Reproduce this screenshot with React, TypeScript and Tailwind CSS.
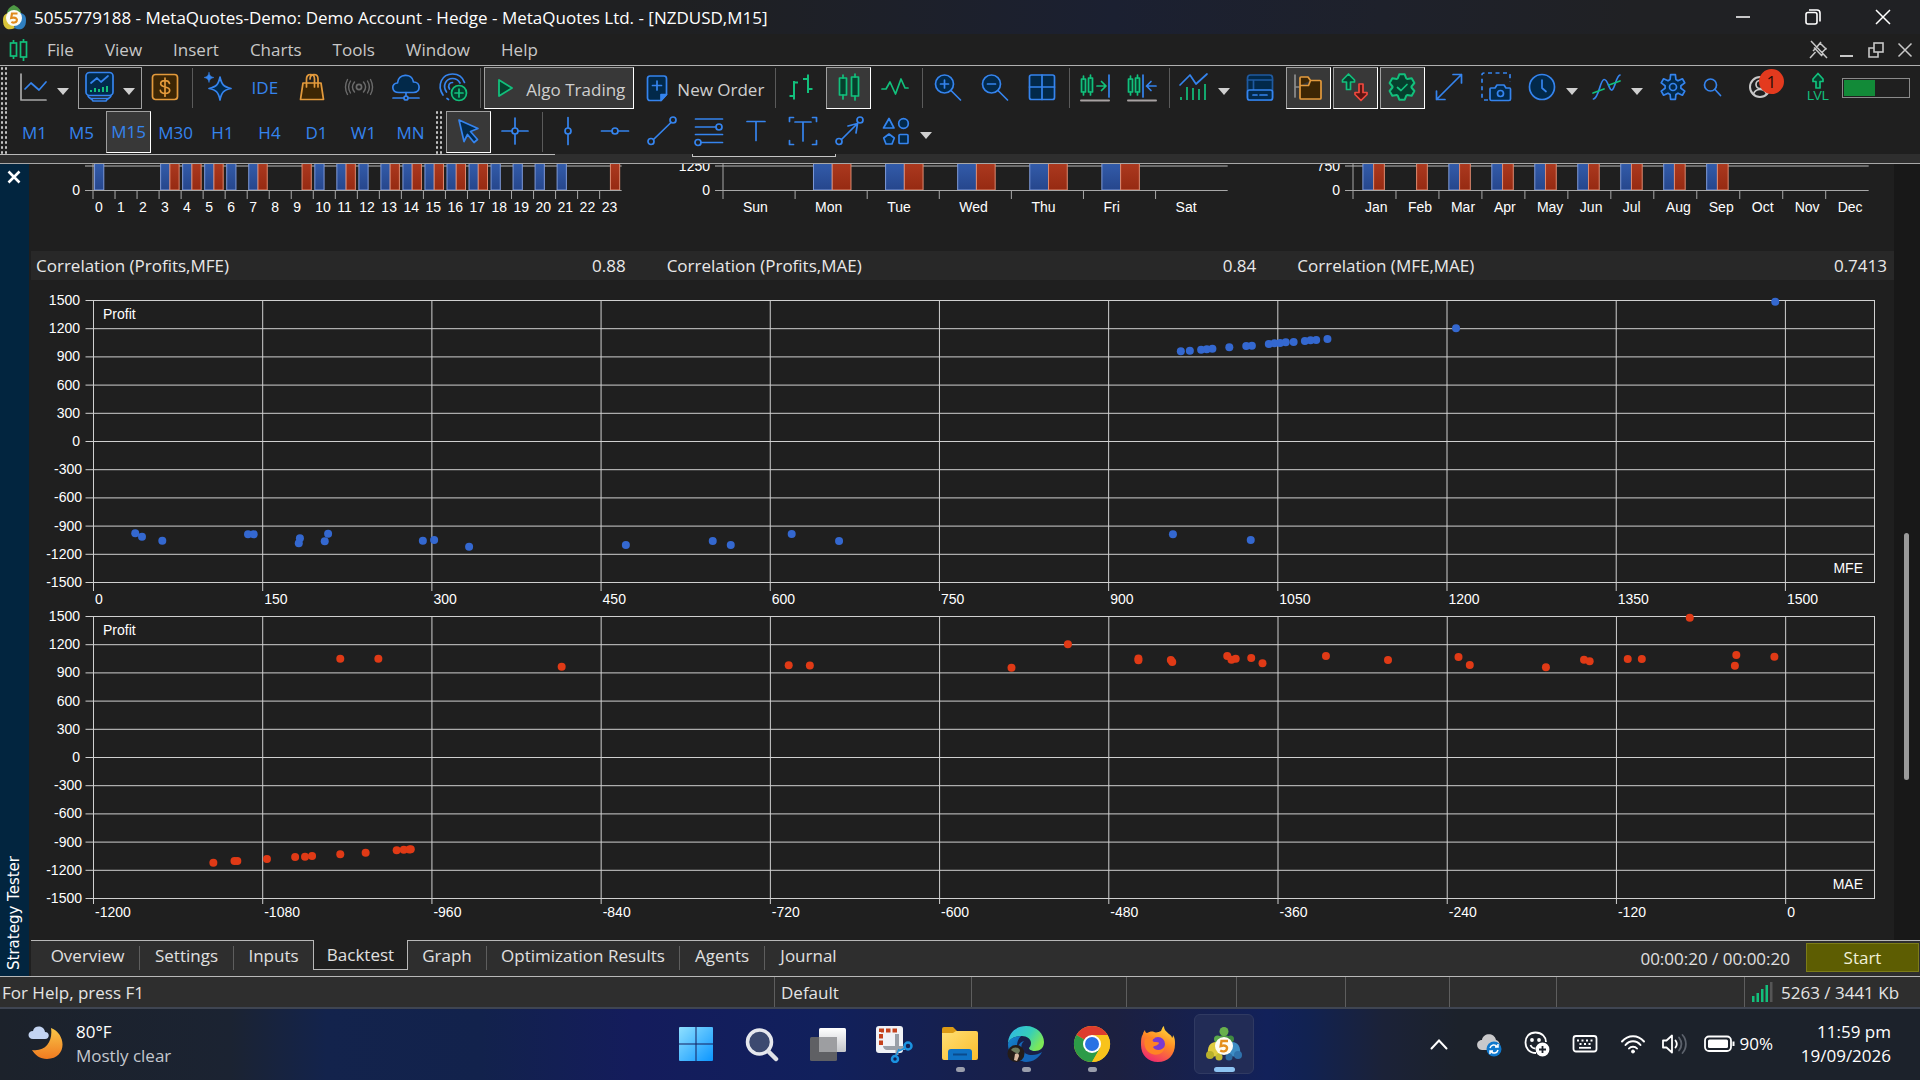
import React from "react";

const BLUE = "#3584ee";
const GREEN = "#12c07c";
const ORANGE = "#e39a3c";
const NAVY = "#02294a";

type IconProps = { children: React.ReactNode; stroke?: string; w?: number; h?: number };

function Icon({ children, stroke = BLUE, w = 32, h = 32 }: IconProps) {
  return (
    <svg
      width={w}
      height={h}
      viewBox={`0 0 ${w} ${h}`}
      fill="none"
      stroke={stroke}
      strokeWidth={1.7}
      strokeLinecap="round"
      strokeLinejoin="round"
      className="shrink-0"
      aria-hidden="true"
    >
      {children}
    </svg>
  );
}

/* Outline of a six-toothed gear centred on (16, 16). */
function gearPath(outer: number, inner: number, toothHalf: number, valleyHalf: number) {
  const pts: string[] = [];
  for (let k = 0; k < 6; k++) {
    const mid = k * 60 - 90;
    const corners = [
      [-valleyHalf, inner],
      [-toothHalf, outer],
      [toothHalf, outer],
      [valleyHalf, inner],
    ];
    for (const [da, r] of corners) {
      const a = ((mid + da) * Math.PI) / 180;
      pts.push(`${(16 + r * Math.cos(a)).toFixed(1)} ${(16 + r * Math.sin(a)).toFixed(1)}`);
    }
  }
  return `M${pts.join("L")}Z`;
}

const BADGE_PATH = gearPath(13, 9.5, 12, 27);
const GEAR_PATH = gearPath(12.5, 8, 11, 21);

/* ---------- toolbar drawings ---------- */

const LineChartIcon = () => (
  <Icon>
    <path d="M4 3v26h25" stroke="#a8a8a8" />
    <path d="M8 18l6-6 8 7 7-8" />
  </Icon>
);

const MarketIcon = () => (
  <Icon>
    <rect x="3" y="1.500" width="27" height="23" rx="3.500" fill={NAVY} />
    <path d="M5 25c1 2.500 4 2.500 5 5h13c1-2.500 4-2.500 5-5M8 27.500h17" />
    <path d="M8 12l6-5 4 4 7-6" />
    <path d="M8 21v-2M12 21v-4M16 21v-3M20 21v-5M24 21v-6" stroke={GREEN} strokeWidth={2} strokeLinecap="butt" />
  </Icon>
);

const DollarIcon = () => (
  <Icon stroke={ORANGE}>
    <rect x="3.500" y="3.500" width="25" height="25" rx="3" fill="#3d2604" />
    <path d="M20.500 12.500c-.5-2-2.300-2.800-4.500-2.800-2.500 0-4.300 1.200-4.300 3.100 0 4.500 9 1.800 9 6.500 0 2-2 3.200-4.700 3.200-2.400 0-4.300-1-4.700-3.100M16 7.200v18" />
  </Icon>
);

const SparkleIcon = () => (
  <Icon>
    <path d="M18 6c1.500 7.500 3.500 9.500 11 11.500-7.500 1.500-9.500 4-11 11.500-1.500-7.500-3.500-10-11-11.500C14.500 15.500 16.500 13.500 18 6z" fill={NAVY} />
    <path d="M7 1.500c.7 3.300 1.600 4.200 5 5-3.400.8-4.300 1.700-5 5-.7-3.300-1.600-4.200-5-5 3.400-.8 4.300-1.700 5-5z" fill={BLUE} strokeWidth={0.5} />
  </Icon>
);

const BagIcon = () => (
  <Icon stroke={ORANGE}>
    <path d="M7 12h18l2.500 16.500h-23z" fill="#3d2604" />
    <path d="M10.500 16V8c0-6 8-6 8 0v8M14 8c0-6 8-6 8 0v8" />
  </Icon>
);

const SignalIcon = () => (
  <Icon stroke="#6b6b6b">
    <circle cx="16" cy="16" r="2.600" />
    <path d="M11.500 11c-2.500 3-2.500 7 0 10M20.500 11c2.500 3 2.500 7 0 10M7.500 10c-2.500 4-2.500 8 0 12M24.500 10c2.500 4 2.500 8 0 12M4.500 8.500c-2.700 5-2.700 10 0 15M27.500 8.500c2.700 5 2.700 10 0 15" strokeWidth={1.4} />
  </Icon>
);

const CloudIcon = () => (
  <Icon>
    <path d="M9 21.500c-8 0-8-9.500-1.500-9.500C8 2.500 22 1.500 23.500 11c7.500 0 7.500 10.500 0 10.500z" fill={NAVY} />
    <path d="M16 21.500v4M3 27h10.500M18.500 27H29" />
    <circle cx="16" cy="27" r="2" />
  </Icon>
);

const RadarIcon = () => (
  <Icon>
    <path d="M6 24C-.5 14 5 3 15.500 3 22 3 26 7 27.500 11.500M9.500 21C5 14.500 9 7.500 15.500 7.500c3.500 0 6 1.700 7.500 4.500M12.500 18c-2-3.500 0-6.500 3-6.500M10 27.500l1.500 1" />
    <circle cx="22" cy="22" r="7.500" stroke={GREEN} fill="#063c2c" />
    <path d="M22 18v8M18 22h8" stroke={GREEN} />
  </Icon>
);

const NewOrderIcon = () => (
  <Icon w={24} h={32}>
    <path d="M5 4h14c1.500 0 2.500 1 2.500 2.500v16L16 28.500H5c-1.500 0-2.500-1-2.500-2.500V6.500C2.500 5 3.500 4 5 4z" fill={NAVY} />
    <path d="M12 9v9M7.500 13.500h9" />
    <path d="M21.500 22.500H16v6z" fill={BLUE} />
  </Icon>
);

const BarsIcon = () => (
  <Icon stroke={GREEN}>
    <path d="M9 10v18.500M9 11.500h4M4.500 25H9M23 3.500V22M18 8h5M23 18h4.500" strokeWidth={2} strokeLinecap="butt" />
  </Icon>
);

const CandlesIcon = () => (
  <Icon stroke={GREEN}>
    <rect x="6.500" y="7" width="7" height="17" fill="#06402d" />
    <rect x="18.500" y="6" width="7" height="19" fill="#06402d" />
    <path d="M10 4v3M10 24v4M22 3v3M22 25v4" />
  </Icon>
);

const ZigzagIcon = () => (
  <Icon stroke={GREEN}>
    <path d="M3 18h4l4-7 5.500 12 5.500-15 4 9h3" />
  </Icon>
);

const MagnifierIcon = ({ plus = false }: { plus?: boolean }) => (
  <Icon>
    <circle cx="12.500" cy="13" r="9" fill={NAVY} />
    <path d="M19 19.500l9.500 9.500M8.500 13h8" />
    {plus && <path d="M12.500 9v8" />}
  </Icon>
);

const GridIcon = () => (
  <Icon>
    <rect x="3.500" y="4" width="25" height="24.500" rx="2" fill={NAVY} />
    <path d="M16 4v24.500M3.500 16h25" />
  </Icon>
);

const ScrollIcon = ({ back = false }: { back?: boolean }) => (
  <Icon>
    <g stroke={GREEN}>
      <rect x="2.500" y="8" width="4" height="13" fill="#06402d" />
      <rect x="9.500" y="7" width="4" height="14" fill="#06402d" />
      <path d="M4.500 5v3M4.500 21v3M11.500 4v3M11.500 21v3" />
      {!back && <path d="M18 15h8M22.500 10.500L27 15l-4.500 4.500" />}
    </g>
    {back ? <path d="M17 4v22M20.500 15H30M25 10.500L20.500 15l4.500 4.500" /> : <path d="M30 4v22" />}
    <path d="M2 29.500h28" stroke="#a8a2a2" strokeWidth={2} />
  </Icon>
);

const IndicatorsIcon = () => (
  <Icon>
    <path d="M2 14L12 4l6 9 11-10" />
    <path d="M3 29v-3M9 29V16M15 29V17M21 29V18M27 29V13" stroke={GREEN} strokeLinecap="butt" />
  </Icon>
);

const DataWindowIcon = () => (
  <Icon>
    <rect x="3.500" y="4" width="25" height="25" rx="3" fill={NAVY} stroke="#1f5aa0" />
    <path d="M3.500 9h25M9.500 9v10" stroke="#1f5aa0" />
    <rect x="3.500" y="19" width="25" height="10" rx="2" fill={NAVY} />
    <path d="M9 24h4M16 24h7" />
  </Icon>
);

const FolderIcon = () => (
  <Icon stroke={ORANGE}>
    <path d="M3 4v22M3 16h4" stroke="#8d8d8d" />
    <path d="M8 7c0-.6.400-1 1-1h7l2.500 3.500H28c.6 0 1 .4 1 1V27c0 .6-.4 1-1 1H9c-.6 0-1-.4-1-1zM8 14.500h8.500l2-5" fill="#3d2604" />
  </Icon>
);

const TradeArrowsIcon = () => (
  <Icon stroke={GREEN}>
    <path d="M9.500 3L3.500 9v2h4v7.500h4V11h4V9z" fill="#06402d" />
    <path d="M22 29.500l-6-6v-2h4V13h4v8.500h4v2z" fill="#5c1512" stroke="#f0483e" />
  </Icon>
);

const BadgeCheckIcon = () => (
  <Icon stroke={GREEN}>
    <path d={BADGE_PATH} fill="#06402d" strokeWidth={2} />
    <path d="M11.500 16.500l3.500 3 6-6" />
  </Icon>
);

const ExpandIcon = () => (
  <Icon>
    <path d="M3.500 28.500l25-25M20 3.500h8.500V12M3.500 20v8.500H12" />
  </Icon>
);

const CameraIcon = () => (
  <Icon>
    <path d="M8 29H4c-1.500 0-2-.5-2-2V4c0-1.500.5-2 2-2h24c1.500 0 2 .5 2 2v7" strokeDasharray="4 3.500" strokeLinecap="butt" />
    <path d="M11 17h4l2-3h7l2 3h3.500c.8 0 1 .5 1 1v10c0 1-.5 1.500-1.500 1.500H11.500c-1 0-1.500-.5-1.500-1.500V18c0-.6.3-1 1-1z" fill={NAVY} />
    <circle cx="20.500" cy="22.500" r="3" />
  </Icon>
);

const ClockIcon = () => (
  <Icon>
    <circle cx="16" cy="16" r="12.500" fill={NAVY} />
    <path d="M16 9v8l4 3.500" />
  </Icon>
);

const CurveIcon = () => (
  <Icon>
    <path d="M2.500 28C8 27 9 9 13 8.500S18 20 21 19s4-14 8-15" />
    <path d="M2 22l11-4M18 14l11-4" stroke={GREEN} />
  </Icon>
);

const GearIcon = () => (
  <Icon>
    <path d={GEAR_PATH} fill={NAVY} />
    <circle cx="16" cy="16" r="3.500" />
  </Icon>
);

const SearchIcon = () => (
  <Icon>
    <circle cx="14.500" cy="14" r="6" />
    <path d="M19 18.500l5.500 6" />
  </Icon>
);

const UserIcon = () => (
  <Icon stroke="#c9c9c9">
    <circle cx="15" cy="16" r="10" strokeWidth={2} />
    <circle cx="15" cy="13.500" r="4" />
    <path d="M8.500 23c2-6 11-6 13 0" />
  </Icon>
);

const LevelIcon = () => (
  <Icon w={24} h={18} stroke={GREEN}>
    <path d="M12 1.500L7 7v2.500h3V16h4V9.500h3V7z" fill="#06402d" />
  </Icon>
);

const PointerIcon = () => (
  <Icon>
    <path d="M6 5l19 8.500-7.500 3 7 8-3.500 3-6.500-8-3.500 7z" fill={NAVY} />
  </Icon>
);

const CrosshairIcon = () => (
  <Icon>
    <path d="M16 3v9.500M16 19.500V29M3 16h9.500M19.500 16H29" />
    <circle cx="16" cy="16" r="3" />
  </Icon>
);

const VLineIcon = () => (
  <Icon>
    <path d="M16 2.500v10M16 19.500v10" />
    <circle cx="16" cy="16" r="3" />
  </Icon>
);

const HLineIcon = () => (
  <Icon>
    <path d="M2.500 16h10M19.500 16h10" />
    <circle cx="16" cy="16" r="3" />
  </Icon>
);

const TrendIcon = () => (
  <Icon>
    <path d="M7.500 24.500L25 7.500" />
    <circle cx="5" cy="26.500" r="3" />
    <circle cx="27" cy="5" r="3" />
  </Icon>
);

const FiboIcon = () => (
  <Icon>
    <path d="M2.500 4h27M2.500 12h20M2.500 19.500h27M8.500 27.500h21" />
    <circle cx="26" cy="12" r="3" />
    <circle cx="5" cy="27.500" r="3" />
  </Icon>
);

const TextIcon = () => (
  <Icon>
    <path d="M7 6.500h18M16 6.500v19" />
  </Icon>
);

const LabelIcon = () => (
  <Icon>
    <path d="M8 7h16M16 7v19M2.500 6.500v-4h4M25.500 2.500h4v4M2.500 25.500v4h4M25.500 29.500h4v-4" />
  </Icon>
);

const ArrowLineIcon = () => (
  <Icon>
    <path d="M7.500 24.500L22 10M14 11l9.500-2.500L22 18" />
    <circle cx="5" cy="26.500" r="3" />
    <circle cx="26" cy="5" r="3" />
  </Icon>
);

const ShapesIcon = () => (
  <Icon>
    <g fill={NAVY}>
      <path d="M9 3.500L14 13H3.500z" />
      <circle cx="23.500" cy="8.500" r="4.800" />
      <path d="M9 19l5.300 4-2.300 6H6l-2.300-6z" />
      <rect x="19" y="19.500" width="9" height="9" rx="1" />
    </g>
  </Icon>
);

/* ---------- toolbar pieces ---------- */

const Caret = () => (
  <span className="mt-2 h-0 w-0 border-x-[6px] border-t-[7px] border-x-transparent border-t-[#cfcfcf]" />
);

const Separator = () => <span className="ml-[3px] mr-[2px] h-[40px] w-px shrink-0 bg-[#5a5a5a]" />;

const Grip = () => (
  <span className="mr-[2px] h-full w-[8px] shrink-0 bg-[radial-gradient(circle,#c4c4c4_1px,transparent_1.500px)] bg-[length:4px_5px]" />
);

const ACTIVE = "border border-t-[#a0a0a0] border-l-[#a0a0a0] border-r-white border-b-white bg-[#383838]";

function Tool({ label, children }: { label: string; children: React.ReactNode }) {
  return (
    <button aria-label={label} className="flex h-[42px] w-[47px] shrink-0 items-center justify-center pb-[2px] pr-px">
      {children}
    </button>
  );
}

function ActiveTool({ label, children }: { label: string; children: React.ReactNode }) {
  return (
    <button aria-label={label} aria-pressed="true" className={`mx-px flex h-[42px] w-[45px] shrink-0 items-center justify-center pb-[2px] ${ACTIVE}`}>
      {children}
    </button>
  );
}

function MenuTool({ label, children }: { label: string; children: React.ReactNode }) {
  return (
    <button aria-label={label} className="flex h-[42px] w-[65px] shrink-0 items-center gap-2 pb-[2px] pl-[6px]">
      {children}
      <Caret />
    </button>
  );
}

function Timeframe({ name }: { name: string }) {
  return (
    <button className="flex h-[42px] w-[47px] shrink-0 items-center justify-center pt-px text-[17px] text-[#3584ee]">{name}</button>
  );
}

function TitleBar() {
  return (
    <header className="flex h-[34px] items-center bg-[linear-gradient(90deg,#1f2022_0%,#1f2022_35%,#1b2031_58%,#1e212b_72%,#202124_85%,#202124_100%)] text-white">
      <svg width="30" height="32" viewBox="0 0 30 32" aria-hidden="true">
        <path d="M14 4c6 3 7 6 7 9H7c0-4 2-7 7-9z" fill="#4e9a45" />
        <path d="M3 19c0-5 3-7 6-7l6 15c-7 3-12 1-12-8z" fill="#d9c53a" />
        <path d="M26 19c0-5-3-7-6-7l-6 15c7 3 12 1 12-8z" fill="#2f7fc0" />
        <circle cx="14" cy="17" r="8" fill="#fbfbf4" />
        <path d="M17.500 12.500h-5.500l-.8 4.500c5-1.300 6.300 1 5.500 3-.8 1.700-3.500 2-5.300.8" fill="none" stroke="#e08a1c" strokeWidth="2.200" />
      </svg>
      <h1 className="ml-1 flex-1 pt-px text-[17px] leading-6">
        5055779188 - MetaQuotes-Demo: Demo Account - Hedge - MetaQuotes Ltd. - [NZDUSD,M15]
      </h1>
      <div className="mr-[2px] flex">
        <button aria-label="Minimize" className="flex h-8 w-[70px] items-center justify-center">
          <svg width="16" height="16" stroke="white" fill="none" strokeWidth="1.500"><path d="M1 8h14" /></svg>
        </button>
        <button aria-label="Restore" className="flex h-8 w-[70px] items-center justify-center">
          <svg width="18" height="18" stroke="white" fill="none" strokeWidth="1.600">
            <rect x="2" y="4.500" width="11" height="11.500" rx="2" />
            <path d="M5 2h8c2 0 3 1 3 3v8.500" />
          </svg>
        </button>
        <button aria-label="Close" className="flex h-8 w-[70px] items-center justify-center">
          <svg width="16" height="16" stroke="white" fill="none" strokeWidth="1.500"><path d="M1 1l14 14M15 1L1 15" /></svg>
        </button>
      </div>
    </header>
  );
}

const MENU = ["File", "View", "Insert", "Charts", "Tools", "Window", "Help"];

function MenuBar() {
  return (
    <nav className="flex h-[32px] items-center border-b border-[#b0b0b0] pl-[9px]">
      <svg width="20" height="24" fill="none" stroke={GREEN} strokeWidth="1.700" aria-hidden="true">
        <path d="M4.500 2v3M4.500 18v3M14.500 1v3M14.500 19v4" />
        <rect x="1.500" y="5" width="6" height="13" />
        <rect x="11.500" y="4" width="6" height="15" />
      </svg>
      <ul className="ml-[3px] flex flex-1 gap-px text-[17px] leading-6 text-[#c8c8c8]">
        {MENU.map((m) => (
          <li key={m}><button className="px-[15px]">{m}</button></li>
        ))}
      </ul>
      <div className="flex text-[#c8c8c8]">
        <button aria-label="Unpin" className="flex w-[29px] justify-center">
          <svg width="20" height="20" fill="none" stroke="currentColor" strokeWidth="1.500">
            <path d="M2 1l16 17M1 18l5.500-6M5 7.500l8 8.500M4 11l3-3M11 3l6.500 6.500M12 2l-5 6M17.500 8l-5 5M12.500 16l1.500-3" />
          </svg>
        </button>
        <button aria-label="Minimize chart" className="flex w-[28px] justify-center">
          <svg width="16" height="20" stroke="currentColor" strokeWidth="2"><path d="M1 16h13" /></svg>
        </button>
        <button aria-label="Restore chart" className="flex w-[29px] justify-center">
          <svg width="18" height="20" fill="none" stroke="currentColor" strokeWidth="1.600">
            <rect x="7" y="3" width="9" height="9" />
            <path d="M7 8H2v9h9v-5" />
          </svg>
        </button>
        <button aria-label="Close chart" className="mr-px flex w-[29px] justify-center">
          <svg width="16" height="20" stroke="currentColor" strokeWidth="1.500"><path d="M1.500 3.500l13 13M14.500 3.500l-13 13" /></svg>
        </button>
      </div>
    </nav>
  );
}

function Toolbars() {
  return (
    <div className="h-[88px] overflow-hidden">
      <div className="flex h-[44px] items-center">
        <Grip />
        <button aria-label="Chart type" className="flex h-[42px] w-[67px] shrink-0 items-center gap-2 pb-[2px] pl-[7px]">
          <LineChartIcon />
          <Caret />
        </button>
        <button aria-label="Market" className="ml-px flex h-[42px] w-[64px] shrink-0 items-center gap-2 border border-[#a0a0a0] pb-[2px] pl-[4px]">
          <MarketIcon />
          <Caret />
        </button>
        <Tool label="Deposit"><DollarIcon /></Tool>
        <span className="w-px" />
        <Separator />
        <Tool label="Assistant"><SparkleIcon /></Tool>
        <button className="flex h-[42px] w-[47px] shrink-0 items-center justify-center pr-[2px] text-[17px] text-[#3584ee]">IDE</button>
        <Tool label="Market store"><BagIcon /></Tool>
        <Tool label="Signals"><SignalIcon /></Tool>
        <Tool label="Virtual hosting"><CloudIcon /></Tool>
        <Tool label="Add broker"><RadarIcon /></Tool>
        <Separator />
        <button aria-pressed="true" className={`ml-px flex h-[42px] w-[150px] shrink-0 items-center gap-[10px] pl-[11px] text-[17px] text-[#cfcfcf] ${ACTIVE}`}>
          <svg width="20" height="24" fill="#06402d" stroke={GREEN} strokeWidth="1.800" strokeLinejoin="round" aria-hidden="true">
            <path d="M3 4l13 8-13 8z" />
          </svg>
          <span className="whitespace-nowrap pt-1">Algo Trading</span>
        </button>
        <button className="flex h-[42px] w-[138px] shrink-0 items-center gap-2 pl-[11px] text-[17px] text-[#cfcfcf]">
          <NewOrderIcon />
          <span className="whitespace-nowrap pt-1">New Order</span>
        </button>
        <Separator />
        <Tool label="Bar chart"><BarsIcon /></Tool>
        <ActiveTool label="Candlesticks"><CandlesIcon /></ActiveTool>
        <Tool label="Line chart"><ZigzagIcon /></Tool>
        <Separator />
        <Tool label="Zoom in"><MagnifierIcon plus /></Tool>
        <Tool label="Zoom out"><MagnifierIcon /></Tool>
        <Tool label="Tile windows"><GridIcon /></Tool>
        <Separator />
        <Tool label="Auto scroll"><ScrollIcon /></Tool>
        <Tool label="Chart shift"><ScrollIcon back /></Tool>
        <Separator />
        <MenuTool label="Indicators"><IndicatorsIcon /></MenuTool>
        <Tool label="Data window"><DataWindowIcon /></Tool>
        <span className="w-px" />
        <ActiveTool label="Navigator"><FolderIcon /></ActiveTool>
        <ActiveTool label="Trade"><TradeArrowsIcon /></ActiveTool>
        <ActiveTool label="Strategy tester"><BadgeCheckIcon /></ActiveTool>
        <Tool label="Full screen"><ExpandIcon /></Tool>
        <Tool label="Screenshot"><CameraIcon /></Tool>
        <MenuTool label="Period"><ClockIcon /></MenuTool>
        <span className="w-px" />
        <MenuTool label="Objects"><CurveIcon /></MenuTool>
        <Tool label="Options"><GearIcon /></Tool>
        <button aria-label="Search" className="flex h-[42px] w-[34px] shrink-0 items-center justify-center pb-[2px] pr-[4px]"><SearchIcon /></button>
        <span className="flex-1" />
        <button aria-label="Messages" className="relative flex h-[42px] w-[60px] shrink-0 items-center justify-center pb-[2px]">
          <UserIcon />
          <span className="absolute left-[28px] top-[2px] flex size-[25px] items-center justify-center rounded-full bg-[#e33a1e] text-[17px] text-[#2a0c06]">1</span>
        </button>
        <button className="ml-[3px] flex h-[42px] w-[48px] shrink-0 flex-col items-center justify-center pb-[2px] text-[13px] leading-3 text-[#12c07c]">
          <LevelIcon />
          <span className="font-['Liberation_Sans']">LVL</span>
        </button>
        <div role="meter" aria-label="Level" className="mr-[10px] h-[20px] w-[68px] shrink-0 border border-[#8a8a8a] p-px">
          <div className="h-full w-[31px] bg-[#128a38]" />
        </div>
      </div>
      <div className="flex h-[44px] items-center">
        <Grip />
        <span className="w-px" />
        {["M1", "M5"].map((t) => <Timeframe key={t} name={t} />)}
        <button aria-pressed="true" className={`mx-px flex h-[42px] w-[45px] shrink-0 items-center justify-center text-[17px] text-[#3584ee] ${ACTIVE}`}>M15</button>
        {["M30", "H1", "H4", "D1", "W1", "MN"].map((t) => <Timeframe key={t} name={t} />)}
        <span className="w-px" />
        <Grip />
        <ActiveTool label="Cursor"><PointerIcon /></ActiveTool>
        <Tool label="Crosshair"><CrosshairIcon /></Tool>
        <Separator />
        <Tool label="Vertical line"><VLineIcon /></Tool>
        <Tool label="Horizontal line"><HLineIcon /></Tool>
        <Tool label="Trend line"><TrendIcon /></Tool>
        <Tool label="Fibonacci"><FiboIcon /></Tool>
        <Tool label="Text"><TextIcon /></Tool>
        <Tool label="Text label"><LabelIcon /></Tool>
        <Tool label="Arrow line"><ArrowLineIcon /></Tool>
        <button aria-label="Shapes" className="flex h-[42px] w-[65px] shrink-0 items-center gap-2 pb-[2px] pl-[6px]">
          <ShapesIcon />
          <Caret />
        </button>
      </div>
    </div>
  );
}

/* ---------- histograms ---------- */

type HistProps = {
  labels: string[];
  wins: number[];
  losses: number[];
  top?: string;
  margin: string;
  barStart: number;
  barWidth: number;
  labelShift: number;
};

function Histogram({ labels, wins, losses, top, margin, barStart, barWidth, labelShift }: HistProps) {
  const n = labels.length;
  const at = (i: number, frac = 0) => `${((i + frac) / n) * 100}%`;
  return (
    <div className={margin}>
      <svg width="100%" height="87" overflow="visible" className="block font-['Liberation_Sans'] text-[14px]" fill="white">
        <line x1="-8" x2="100%" y1="2" y2="2" stroke="#6c6c6c" strokeWidth="2" />
        {wins.map((i) => (
          <rect key={`w${i}`} x={at(i, barStart)} y="-6" width={at(barWidth)} height="32" fill="url(#winFill)" stroke="#7f9ad8" strokeWidth="1" />
        ))}
        {losses.map((i) => (
          <rect key={`l${i}`} x={at(i, barStart + barWidth)} y="-6" width={at(barWidth)} height="32" fill="url(#lossFill)" stroke="#dd8a70" strokeWidth="1" />
        ))}
        <line x1="-8" x2="100%" y1="26.500" y2="26.500" stroke="#a8a8a8" />
        <line x1="0" x2="0" y1="0" y2="35" stroke="#a8a8a8" />
        {labels.map((l, i) => (
          <g key={l}>
            {i > 0 && <line x1={at(i)} x2={at(i)} y1="27" y2="35" stroke="#a8a8a8" />}
            <text x={at(i)} dx={labelShift} y="48">{l}</text>
          </g>
        ))}
        <text x="-13" y="31" textAnchor="end">0</text>
        {top && <text x="-13" y="7" textAnchor="end">{top}</text>}
      </svg>
    </div>
  );
}

const HOURS = Array.from({ length: 24 }, (_, i) => String(i));
const DAYS = ["Sun", "Mon", "Tue", "Wed", "Thu", "Fri", "Sat"];
const MONTHS = ["Jan", "Feb", "Mar", "Apr", "May", "Jun", "Jul", "Aug", "Sep", "Oct", "Nov", "Dec"];

/* ---------- scatter plots ---------- */

const MFE_POINTS = [
  [37, -977], [43, -1013], [61, -1055], [137, -987], [142, -987], [182, -1083], [183, -1030], [205, -1062],
  [208, -981], [292, -1055], [302, -1048], [333, -1119], [472, -1101], [549, -1058], [565, -1101], [619, -984],
  [661, -1058], [957, -987], [1026, -1048], [964, 960], [972, 966], [982, 977], [987, 981], [992, 987],
  [1007, 1002], [1022, 1016], [1027, 1019], [1042, 1037], [1047, 1045], [1052, 1048], [1057, 1055],
  [1064, 1059], [1074, 1069], [1079, 1077], [1084, 1080], [1094, 1090], [1208, 1204], [1491, 1487],
];

const MAE_POINTS = [
  [-1025, 1051], [-998, 1051], [-868, 966], [-707, 981], [-692, 979], [-549, 955], [-509, 1204], [-459, 1052],
  [-459, 1035], [-436, 1036], [-435, 1017], [-396, 1080], [-393, 1041], [-390, 1051], [-379, 1059], [-371, 1002],
  [-326, 1080], [-282, 1037], [-232, 1069], [-224, 984], [-170, 960], [-143, 1041], [-139, 1023], [-112, 1048],
  [-102, 1048], [-68, 1487], [-35, 1090], [-36, 977], [-8, 1072], [-1115, -1119], [-1100, -1101], [-1098, -1101],
  [-1077, -1080], [-1057, -1058], [-1050, -1055], [-1045, -1048], [-1025, -1030], [-1007, -1013], [-985, -987],
  [-980, -981], [-976, -979], [-975, -977],
];

const PROFIT_TICKS = [1500, 1200, 900, 600, 300, 0, -300, -600, -900, -1200, -1500];

type ScatterProps = { points: number[][]; min: number; max: number; step: number; name: string; color: string; tick: number; labelY: number };

function Scatter({ points, min, max, step, name, color, tick, labelY }: ScatterProps) {
  const xAt = (v: number) => `${((v - min) / (max - min)) * 100}%`;
  const yAt = (v: number) => 0.5 + ((1500 - v) / 3000) * 282;
  const xTicks = Array.from({ length: 11 }, (_, i) => min + i * step);
  return (
    <svg width="100%" height="283" overflow="visible" role="img" aria-label={`Profit by ${name}`} className="block font-['Liberation_Sans'] text-[14px]" fill="white">
      <g transform="translate(0.5 0)">
        <g stroke="#d0d0d0">
          {PROFIT_TICKS.map((v) => (
            <line key={v} x1="-8" x2="100%" y1={yAt(v)} y2={yAt(v)} />
          ))}
          {xTicks.map((v) => (
            <line key={v} x1={xAt(v)} x2={xAt(v)} y1="0" y2={283 + tick} />
          ))}
          <line x1="100%" x2="100%" y1="0" y2="283" />
        </g>
        {points.map(([x, y], i) => (
          <circle key={i} cx={xAt(x)} cy={yAt(y)} r="4" fill={color} />
        ))}
      </g>
      {PROFIT_TICKS.map((v) => (
        <text key={v} x={v < 0 ? -11 : -13} y={yAt(v) + 4.5} textAnchor="end">{v}</text>
      ))}
      {xTicks.map((v) => (
        <text key={v} x={xAt(v)} dx="2" y={labelY}>{v}</text>
      ))}
      <text x="10" y="19">Profit</text>
      <text x="100%" dx="-11" y="273" textAnchor="end">{name}</text>
    </svg>
  );
}

const CORRELATIONS = [
  ["Correlation (Profits,MFE)", "0.88"],
  ["Correlation (Profits,MAE)", "0.84"],
  ["Correlation (MFE,MAE)", "0.7413"],
];

function Report() {
  return (
    <main className="min-w-0 flex-1">
      <svg width="0" height="0" className="absolute" aria-hidden="true">
        <defs>
          <linearGradient id="winFill" x1="0" y1="0" x2="0" y2="1">
            <stop offset="0" stopColor="#3560b0" />
            <stop offset="1" stopColor="#26468c" />
          </linearGradient>
          <linearGradient id="lossFill" x1="0" y1="0" x2="0" y2="1">
            <stop offset="0" stopColor="#b03c22" />
            <stop offset="1" stopColor="#962a12" />
          </linearGradient>
        </defs>
      </svg>
      <div className="grid grid-cols-3 gap-x-[41px] overflow-hidden pl-[5px] pr-[7px]">
        <Histogram
          labels={HOURS}
          wins={[0, 3, 4, 5, 6, 7, 10, 11, 12, 13, 14, 15, 16, 17, 18, 19, 20, 21]}
          losses={[3, 4, 5, 7, 9, 11, 13, 14, 15, 16, 17, 23]}
          margin="ml-[57px] mr-[4px]"
          barStart={0.07}
          barWidth={0.42}
          labelShift={2}
        />
        <Histogram
          labels={DAYS}
          wins={[1, 2, 3, 4, 5]}
          losses={[1, 2, 3, 4, 5]}
          top="1250"
          margin="ml-[56px] mr-[29px]"
          barStart={0.255}
          barWidth={0.26}
          labelShift={20}
        />
        <Histogram
          labels={MONTHS}
          wins={[0, 2, 3, 4, 5, 6, 7, 8]}
          losses={[0, 1, 2, 3, 4, 5, 6, 7, 8]}
          top="750"
          margin="ml-[56px] mr-[18px]"
          barStart={0.23}
          barWidth={0.25}
          labelShift={12}
        />
      </div>
      <dl className="grid grid-cols-3 gap-x-[41px] bg-[#282828] pl-[5px] pr-[7px] pt-px text-[17px] leading-[28px] text-[#e8e8e8]">
        {CORRELATIONS.map(([k, v]) => (
          <div key={k} className="flex justify-between">
            <dt>{k}</dt>
            <dd>{v}</dd>
          </div>
        ))}
      </dl>
      <div className="ml-[62px] mr-[20px] mt-[20px] flex flex-col gap-[33px]">
        <Scatter points={MFE_POINTS} min={0} max={1579} step={150} name="MFE" color="#3468d0" tick={8} labelY={304} />
        <Scatter points={MAE_POINTS} min={-1200} max={63} step={120} name="MAE" color="#e03a16" tick={5} labelY={301} />
      </div>
    </main>
  );
}

const TABS = [
  { name: "Overview", w: "w-[109px] pl-[5px]" },
  { name: "Settings", w: "w-[94px]" },
  { name: "Inputs", w: "w-[79px]" },
  { name: "Backtest", w: "w-[95px]" },
  { name: "Graph", w: "w-[79px]" },
  { name: "Optimization Results", w: "w-[193px]" },
  { name: "Agents", w: "w-[85px]" },
  { name: "Journal", w: "w-[87px]" },
];

function TesterTabs() {
  return (
    <div className="flex h-[36px] items-start bg-[#2e2e2e] text-[17px] text-[#e0e0e0]">
      <div role="tablist" className="flex flex-1">
        {TABS.map((t, i) => {
          const selected = t.name === "Backtest";
          return (
            <button
              key={t.name}
              role="tab"
              aria-selected={selected}
              className={`flex h-[30px] shrink-0 items-center justify-center whitespace-nowrap ${t.w} ${
                selected ? "border border-t-0 border-[#b8b8b8] bg-[#1f1f1f] pt-px" : "border-t border-[#b8b8b8]"
              }`}
            >
              <span className="w-full text-center">{t.name}</span>
              {!selected && i !== 2 && i !== 7 && <span className="mt-1 h-[24px] w-px bg-[#5e5e5e]" />}
            </button>
          );
        })}
        <span className="flex-1 border-t border-[#b8b8b8]" />
      </div>
      <div className="flex h-full items-start border-t border-[#b8b8b8]">
        <span className="mr-4 pt-[6px] leading-6">00:00:20 / 00:00:20</span>
        <button className="mr-px mt-[2px] h-[29px] w-[113px] border border-[#7c7c18] bg-[#5d5d02] text-[#f0f0d8]">Start</button>
      </div>
    </div>
  );
}

function StatusBar() {
  const cells = ["w-[155px]", "w-[110px]", "w-[109px]", "w-[104px]", "w-[107px]", "w-[188px]"];
  return (
    <footer className="flex h-[33px] border-b-2 border-t border-b-[#3f4552] border-t-[#b8b8b8] bg-[#2e2e2e] text-[17px] leading-[32px] text-[#e4e4e4]">
      <span className="flex-1 pl-[2px]">For Help, press F1</span>
      <span className="w-[197px] border-l border-[#5e5e5e] pl-[6px]">Default</span>
      {cells.map((w) => <span key={w} className={`border-l border-[#5e5e5e] ${w}`} />)}
      <span className="flex w-[176px] items-start gap-2 border-l border-[#5e5e5e] pl-[7px]">
        <svg width="21" height="22" aria-hidden="true" className="mt-[4px] shrink-0">
          {[6, 9, 13, 17].map((h, i) => <rect key={h} x={i * 4.5} y={21 - h} width="2.500" height={h} fill={GREEN} />)}
          <rect x="18" y="1" width="2.500" height="20" fill="#555" />
        </svg>
        <span className="whitespace-nowrap">5263 / 3441 Kb</span>
      </span>
    </footer>
  );
}

/* ---------- taskbar ---------- */

const WindowsLogo = () => (
  <svg width="36" height="36" aria-hidden="true">
    <defs>
      <linearGradient id="win" x1="0" y1="0" x2="1" y2="1"><stop offset="0" stopColor="#8fe0ff" /><stop offset="1" stopColor="#0c96ff" /></linearGradient>
    </defs>
    <path d="M2 1h15.500v16.500H1V2a1 1 0 0 1 1-1zM18.500 1H34a1 1 0 0 1 1 1v15.500H18.500zM1 18.500h16.500V35H2a1 1 0 0 1-1-1zM18.500 18.500H35V34a1 1 0 0 1-1 1H18.500z" fill="url(#win)" />
  </svg>
);

const TaskSearch = () => (
  <svg width="36" height="36" fill="none" aria-hidden="true">
    <circle cx="15.500" cy="16" r="12" fill="#3c4a70" stroke="#e6e8ee" strokeWidth="3.500" />
    <path d="M25 26l7 7" stroke="#dfe1e6" strokeWidth="4.500" strokeLinecap="round" />
  </svg>
);

const TaskView = () => (
  <svg width="36" height="36" aria-hidden="true">
    <defs>
      <linearGradient id="tv" x1="0" y1="0" x2="0" y2="1"><stop offset="0" stopColor="#ffffff" /><stop offset="1" stopColor="#c4c6ca" /></linearGradient>
    </defs>
    <rect x="0" y="11" width="27" height="24" rx="1.500" fill="#5f6064" />
    <rect x="9" y="2" width="27" height="24" rx="1.500" fill="url(#tv)" />
    <path d="M9 11h18v15H10.500A1.500 1.500 0 0 1 9 24.500z" fill="#9d9ea1" />
  </svg>
);

const SnipTool = () => (
  <svg width="38" height="38" fill="none" aria-hidden="true">
    <rect x="1" y="1" width="27" height="27" rx="3" fill="#f0f2f6" />
    <path d="M6 20V5.500h16" stroke="#c5421c" strokeWidth="4" strokeDasharray="4.500 2" />
    <path d="M20 9h4v15h-4z" fill="#9aa0a8" />
    <path d="M8 21h22v4H12c-2 0-4-2-4-4z" fill="#9aa0a8" />
    <path d="M22 24v6" stroke="#9aa0a8" strokeWidth="3" />
    <circle cx="33" cy="21" r="3.500" stroke="#1a92e0" strokeWidth="2.500" />
    <circle cx="20" cy="34" r="3" stroke="#1a92e0" strokeWidth="2.500" />
    <path d="M24 26l6-3M24 24l-3 7" stroke="#1a92e0" strokeWidth="1.500" />
  </svg>
);

const Explorer = () => (
  <svg width="38" height="36" aria-hidden="true">
    <defs>
      <linearGradient id="fold" x1="0" y1="0" x2="1" y2="1"><stop offset="0" stopColor="#ffdf74" /><stop offset="1" stopColor="#fbbd2c" /></linearGradient>
    </defs>
    <path d="M1 3a2 2 0 0 1 2-2h9l4 4h18v6H1z" fill="#dc9a14" />
    <path d="M1 7h11l3-2h20a2 2 0 0 1 2 2v25a2 2 0 0 1-2 2H3a2 2 0 0 1-2-2z" fill="url(#fold)" />
    <path d="M7 34v-8a3 3 0 0 1 3-3h18a3 3 0 0 1 3 3v8z" fill="#0f72c4" />
    <path d="M12 28.500h14" stroke="#0a4b8c" strokeWidth="2" />
  </svg>
);

const Edge = () => (
  <svg width="38" height="38" aria-hidden="true">
    <defs>
      <linearGradient id="edgeA" x1="0" y1="0" x2="1" y2="0.500"><stop offset="0" stopColor="#2fb4ea" /><stop offset="0.600" stopColor="#36cfb8" /><stop offset="1" stopColor="#7ce858" /></linearGradient>
      <linearGradient id="edgeB" x1="0" y1="0" x2="1" y2="1"><stop offset="0" stopColor="#1687d0" /><stop offset="1" stopColor="#0d4a9c" /></linearGradient>
    </defs>
    <path d="M1 19C1 8 9 1 19 1c11 0 18 8 18 16 0 6-4 9-9 9-4 0-6-2-6-3 1-1 2-3 2-5 0-4-4-7-9-7-7 0-13 3-14 8z" fill="url(#edgeA)" />
    <path d="M1 19c1-5 6-8 13-8-3 3-4 6-4 10 0 7 6 12 13 13-1 1-3 2-5 2C8 37 1 29 1 19z" fill="url(#edgeB)" />
    <path d="M17 16c-6 6-1 14 8 14 4 0 7-1 10-3-3 6-9 10-16 10-6 0-9-6-9-11 0-5 3-9 7-10z" fill="#1566b8" />
    <circle cx="9" cy="28.500" r="8.500" fill="#241c18" />
    <path d="M4 25c2-4 9-3 9 1l-2 3-4-2z" fill="#6d7a5c" />
    <path d="M8 29c3-1 4 0 4 2l-2 5-3-1z" fill="#d9b9a0" />
  </svg>
);

const Chrome = () => (
  <svg width="38" height="38" viewBox="0 0 38 38" aria-hidden="true">
    <circle cx="19" cy="19" r="18" fill="#f8c31c" />
    <path d="M19 19L3.400 10A18 18 0 0 1 34.600 10z" fill="#dd3c2e" />
    <path d="M3.400 10A18 18 0 0 0 19 37l8-13.500L19 19z" fill="#2c9b48" />
    <path d="M19 10h15.600A18 18 0 0 1 19 37l8-14z" fill="#f8c31c" />
    <circle cx="19" cy="19" r="9" fill="white" />
    <circle cx="19" cy="19" r="7" fill="#2a72e4" />
  </svg>
);

const Firefox = () => (
  <svg width="38" height="38" aria-hidden="true">
    <defs>
      <linearGradient id="ff" x1="0.800" y1="0" x2="0.300" y2="1"><stop offset="0" stopColor="#ffdc3c" /><stop offset="0.450" stopColor="#ff8a24" /><stop offset="1" stopColor="#f02870" /></linearGradient>
    </defs>
    <path d="M4 9c0-1 1-3 2-4 0 2 1 3 2 3 2-1 5-2 7-1 2 1 5 0 7-1 1-2 1-4 3-5 0 4 2 5 5 8 2 1 3 3 3 4 1-1 1-2 1-3 2 3 2 6 2 9 0 11-7 18-17 18S2 30 2 20c0-5 0-8 2-11z" fill="url(#ff)" />
    <circle cx="19" cy="19" r="7" fill="#7a3ad0" />
    <path d="M6 14c4-1 6-3 10-1-3 1-3 3-1 4 3 0 5 0 5 1-1 3-4 2-6 4 2 4 9 4 12-1-1 8-8 10-13 8-6-2-9-9-7-15z" fill="#ff8424" />
  </svg>
);

const MetaTrader = () => (
  <svg width="38" height="38" aria-hidden="true">
    <path d="M10 20c0-6 4-10 9-10s9 4 9 10l-4 4H14z" fill="#4f9a44" />
    <circle cx="12.500" cy="14" r="3.500" fill="#5aa84a" />
    <circle cx="25.500" cy="14" r="3.500" fill="#3f8a40" />
    <circle cx="19" cy="6.500" r="4.500" fill="#68b04c" />
    <path d="M3 30c-1-8 2-13 8-13l7 8c-2 6-8 8-15 5z" fill="#e0cc40" />
    <path d="M35 30c1-8-2-13-8-13l-7 8c2 6 8 8 15 5z" fill="#3d8cc4" />
    <circle cx="5" cy="30" r="4" fill="#b8b02c" />
    <circle cx="33" cy="30" r="4" fill="#2f72ac" />
    <circle cx="14" cy="32" r="3.500" fill="#c4bc34" />
    <circle cx="24" cy="32" r="3.500" fill="#2c6ca4" />
    <circle cx="19" cy="21" r="9" fill="#fffdf4" />
    <path d="M23 16h-6.500l-.8 5c5.500-1.500 7 1 6 3.500-.8 2-4 2.500-6.500 1" fill="none" stroke="#e5901e" strokeWidth="2.400" />
  </svg>
);

const APPS = [
  { name: "Start", icon: <WindowsLogo />, state: "" },
  { name: "Search", icon: <TaskSearch />, state: "" },
  { name: "Task view", icon: <TaskView />, state: "" },
  { name: "Snipping Tool", icon: <SnipTool />, state: "" },
  { name: "File Explorer", icon: <Explorer />, state: "open" },
  { name: "Microsoft Edge", icon: <Edge />, state: "open" },
  { name: "Google Chrome", icon: <Chrome />, state: "open" },
  { name: "Firefox", icon: <Firefox />, state: "" },
  { name: "MetaTrader 5", icon: <MetaTrader />, state: "active" },
];

function Taskbar() {
  return (
    <div className="grid h-[71px] grid-cols-[1fr_auto_1fr] items-center overflow-hidden bg-[linear-gradient(90deg,#1c222b_0%,#1b2332_12%,#13234c_17%,#12224c_25%,#141c5c_33%,#11205c_43%,#16204e_50%,#1c2040_58%,#12215a_66%,#112252_68%,#1b2238_72%,#1c222b_76%)] pb-px text-[17px] leading-6 text-white">
      <button aria-label="Weather" className="flex items-center gap-[10px] pb-px pl-[27px] text-left">
        <svg width="39" height="38" aria-hidden="true">
          <defs>
            <linearGradient id="moon" x1="0" y1="0" x2="0" y2="1"><stop offset="0" stopColor="#f8c648" /><stop offset="1" stopColor="#f07a20" /></linearGradient>
          </defs>
          <path d="M24 3c16 6 16 31-4 31-7 0-12-4-15-9 14 2 21-9 19-22z" fill="url(#moon)" />
          <path d="M6 14c-6 0-6-8 0-8 1-6 11-6 12 1 5 0 5 7 0 7z" fill="#c3d4f2" />
        </svg>
        <span className="flex flex-col">
          <span>80°F</span>
          <span className="text-[#c4c8ce]">Mostly clear</span>
        </span>
      </button>
      <div className="flex">
        {APPS.map((a) => (
          <button
            key={a.name}
            aria-label={a.name}
            className={`relative mx-[3px] flex h-[60px] w-[60px] items-center justify-center rounded-md ${
              a.state === "active" ? "border border-[#303a62] bg-[#222c56]" : ""
            }`}
          >
            {a.icon}
            {a.state === "open" && <span className="absolute bottom-[2px] h-[5px] w-[9px] rounded-full bg-[#9a9eac]" />}
            {a.state === "active" && <span className="absolute bottom-px h-[5px] w-[21px] rounded-full bg-[#8ec4f2]" />}
          </button>
        ))}
      </div>
      <div className="flex items-center justify-end pb-px pr-[29px]">
        <svg width="18" height="12" fill="none" stroke="white" strokeWidth="2" className="mr-[28px]" role="img" aria-label="Hidden icons">
          <path d="M1.500 10.500L9 2.500l7.500 8" strokeLinecap="round" />
        </svg>
        <svg width="26" height="26" className="mr-[22px]" role="img" aria-label="OneDrive">
          <path d="M6 19C-1 18 0 9 6 9c1-7 12-8 14 0 5 1 5 10 0 10z" fill="#c9c9cb" />
          <circle cx="18" cy="18" r="7.500" fill="#0f78cc" />
          <path d="M14 17c1-3.500 5-4 7-1.500M22 13v3h-3M22 19c-1 3.500-5 4-7 1.500M14 23v-3h3" fill="none" stroke="white" strokeWidth="1.500" />
        </svg>
        <svg width="26" height="26" fill="none" stroke="white" strokeWidth="1.800" className="mr-[22px]" role="img" aria-label="Emoji">
          <path d="M12 22C5 22 1.500 17 1.500 11.500S5 1.500 11.500 1.500 22 6 22 11" />
          <circle cx="8" cy="9" r="1" fill="white" />
          <circle cx="15" cy="9" r="1" fill="white" />
          <path d="M6.500 14c1 2.500 3 3.500 5 3.500" />
          <circle cx="18.500" cy="18.500" r="6" fill="white" />
          <path d="M15 18.500h7M18.500 15v7" stroke="#1c222b" />
        </svg>
        <svg width="26" height="20" fill="none" stroke="white" strokeWidth="1.800" className="mr-[22px]" role="img" aria-label="Keyboard">
          <rect x="1.500" y="2" width="23" height="15.500" rx="2.500" />
          <path d="M5 6.500h16M7.500 10h12" strokeDasharray="2 2.500" />
          <path d="M7 13.800h12" />
        </svg>
        <svg width="26" height="20" fill="none" stroke="white" strokeWidth="2" strokeLinecap="round" className="mr-[15px]" role="img" aria-label="Wi-Fi">
          <path d="M2 7.500c6-7 16-7 22 0M5.500 11c4-5 11-5 15 0M9 14.500c2-2.500 6-2.500 8 0" />
          <circle cx="13" cy="17.500" r="1.500" fill="white" strokeWidth="1" />
        </svg>
        <svg width="26" height="22" fill="none" stroke="white" strokeWidth="1.800" strokeLinecap="round" strokeLinejoin="round" className="mr-[17px]" role="img" aria-label="Volume">
          <path d="M2 7.500h3.500L11 2.500v17l-5.500-5H2z" />
          <path d="M14.500 7.500c1.500 2 1.500 5 0 7" />
          <path d="M18 4.500c3 4 3 9 0 13M21.500 2c4.500 5 4.500 13 0 18" stroke="#5c626c" />
        </svg>
        <svg width="31" height="18" fill="none" stroke="white" strokeWidth="1.800" className="mr-[5px]" role="img" aria-label="Battery">
          <rect x="1" y="1.500" width="26" height="14.500" rx="4" />
          <rect x="4" y="4.500" width="20" height="8.500" rx="1.500" fill="white" stroke="none" />
          <path d="M29.500 6.500v4.500" strokeWidth="2" />
        </svg>
        <span className="mr-[24px]">90%</span>
        <div className="w-[94px] text-right">
          <div>11:59 pm</div>
          <div>19/09/2026</div>
        </div>
      </div>
    </div>
  );
}

export default function App() {
  return (
    <div className="flex min-h-screen flex-col overflow-hidden bg-[#1f1f1f] font-['Open_Sans','Noto_Sans',sans-serif]">
      <TitleBar />
      <MenuBar />
      <Toolbars />
      <div className="flex h-[10px] items-start border-b border-[#a8a8a8] bg-[#2e2e2e]">
        <span className="mr-[137px] h-px w-[555px] bg-[#b8b8b8]" />
        <span className="h-[3px] w-[144px] border border-t-0 border-[#c4c4c4] bg-[#1f1f1f]" />
      </div>
      <section className="flex flex-1">
        <aside className="mr-[2px] flex w-[29px] flex-col items-center justify-between bg-[#02253f] pb-[6px] pr-px pt-[6px] text-white">
          <button aria-label="Close tester">
            <svg width="14" height="14" stroke="white" strokeWidth="2.600"><path d="M1.500 1.500l11 11M12.500 1.500l-11 11" /></svg>
          </button>
          <span className="rotate-180 whitespace-nowrap font-['DejaVu_Sans'] text-[15px] [writing-mode:vertical-rl]">Strategy Tester</span>
        </aside>
        <div className="flex min-w-0 flex-1 flex-col">
          <div className="flex flex-1">
            <Report />
            <div className="w-[26px] bg-[#181818] pl-[10px] pt-[369px]">
              <div className="h-[247px] w-[5px] rounded-full bg-[#9a9a9a]" />
            </div>
          </div>
          <TesterTabs />
        </div>
      </section>
      <StatusBar />
      <Taskbar />
    </div>
  );
}
